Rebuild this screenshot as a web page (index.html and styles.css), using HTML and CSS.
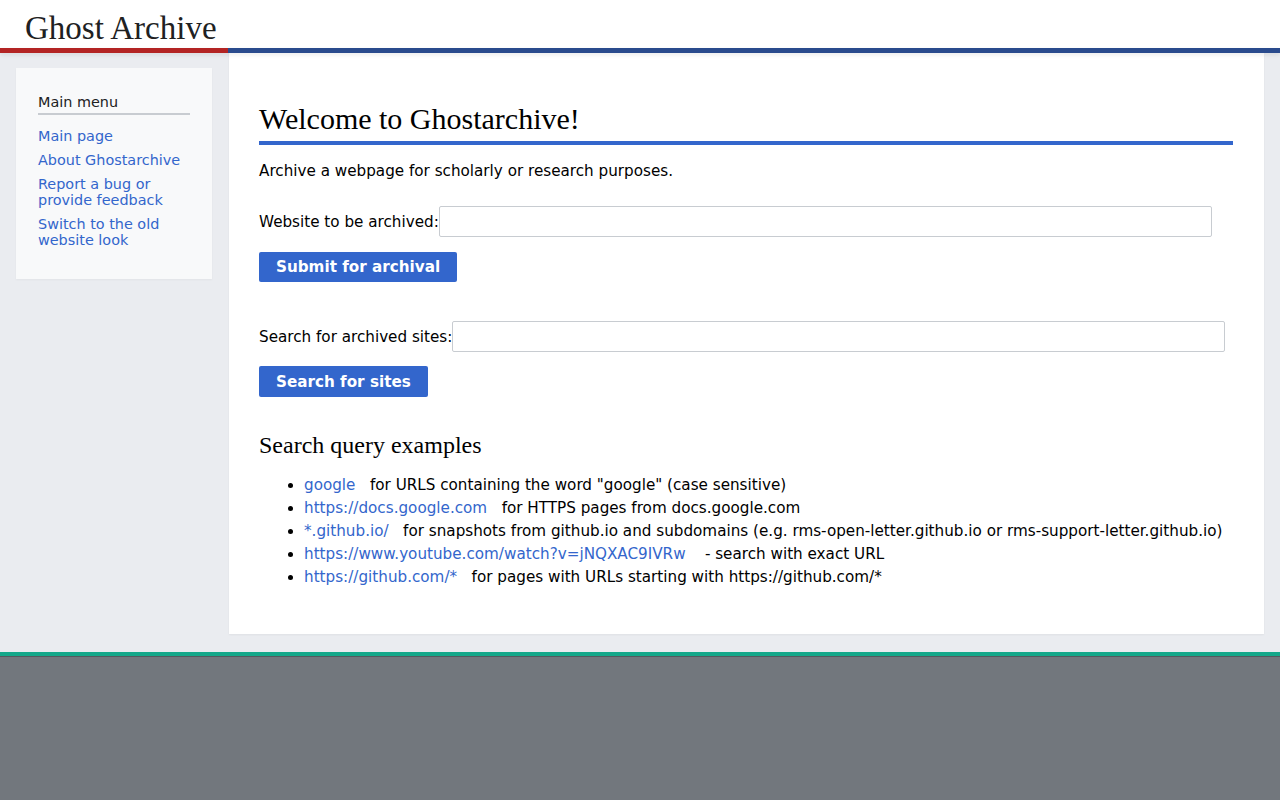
FILE: index.html
```html
<!DOCTYPE html>
<html lang="en">
<head>
<meta charset="utf-8">
<title>Ghost Archive</title>
<link rel="stylesheet" href="styles.css">
</head>
<body>
<header class="site-header">
  <a class="logo" href="#">Ghost Archive</a>
</header>
<div class="header-bar"><span class="bar-red"></span><span class="bar-blue"></span></div>
<div class="page">
  <nav class="sidebar">
    <div class="menu-box">
      <h3 class="menu-title">Main menu</h3>
      <ul class="menu-list">
        <li><a href="#">Main page</a></li>
        <li><a href="#">About Ghostarchive</a></li>
        <li><a href="#">Report a bug or provide feedback</a></li>
        <li><a href="#">Switch to the old website look</a></li>
      </ul>
    </div>
  </nav>
  <main class="content">
    <h1 class="page-title">Welcome to Ghostarchive!</h1>
    <p class="intro">Archive a webpage for scholarly or research purposes.</p>
    <form class="archive-form">
      <div class="field"><label for="archive">Website to be archived:</label><input id="archive" class="text-input" type="text"></div>
      <button class="btn" type="button">Submit for archival</button>
    </form>
    <form class="search-form">
      <div class="field"><label for="search">Search for archived sites:</label><input id="search" class="text-input" type="text"></div>
      <button class="btn btn-search" type="button">Search for sites</button>
    </form>
    <h2 class="section-title">Search query examples</h2>
    <ul class="examples">
      <li><a href="#">google</a>&nbsp;&nbsp; for URLS containing the word "google" (case sensitive)</li>
      <li><a href="#">https://docs.google.com</a>&nbsp;&nbsp; for HTTPS pages from docs.google.com</li>
      <li><a href="#">*.github.io/</a>&nbsp;&nbsp; for snapshots from github.io and subdomains (e.g. rms-open-letter.github.io or rms-support-letter.github.io)</li>
      <li><a href="#">https://www.youtube.com/watch?v=jNQXAC9IVRw</a>&nbsp;&nbsp;&nbsp; - search with exact URL</li>
      <li><a href="#">https://github.com/*</a>&nbsp;&nbsp; for pages with URLs starting with https://github.com/*</li>
    </ul>
  </main>
</div>
<footer class="site-footer"></footer>
</body>
</html>
```

FILE: styles.css
```css
html, body {
  margin: 0;
  padding: 0;
}

body {
  min-height: 100vh;
  display: flex;
  flex-direction: column;
  background: #eaecf0;
  color: #000;
  font-family: "DejaVu Sans", sans-serif;
  font-size: 15.2px;
}

a {
  color: #3366cc;
  text-decoration: none;
}

/* Header */
.site-header {
  height: 48px;
  background: #fff;
  padding-left: 25px;
  display: flex;
  align-items: flex-end;
}

.logo {
  color: #202122;
  font-family: "Liberation Serif", serif;
  font-size: 33px;
  line-height: 40px;
  padding-bottom: 0;
}

.header-bar {
  display: flex;
  height: 5px;
  box-shadow: 0 2px 4px rgba(0, 0, 0, 0.08);
  position: relative;
  z-index: 1;
}

.bar-red {
  width: 228px;
  background: #b32424;
}

.bar-blue {
  flex: 1;
  background: #2a4b8d;
}

/* Page columns */
.page {
  display: grid;
  grid-template-columns: 229px 1fr;
  padding-right: 16px;
}

.sidebar {
  padding: 15px 17px 0 16px;
}

.menu-box {
  background: #f8f9fa;
  padding: 25px 22px 31px;
  box-shadow: 0 1px 2px rgba(0, 0, 0, 0.04);
}

.menu-title {
  margin: 0;
  font-size: 14.4px;
  font-weight: normal;
  color: #202122;
  line-height: 18px;
  padding-bottom: 2px;
  border-bottom: 2px solid #c8ccd1;
}

.menu-list {
  list-style: none;
  margin: 13px 0 0;
  padding: 0;
  font-size: 14.4px;
  line-height: 16px;
}

.menu-list li {
  margin-bottom: 8px;
}

.menu-list li:last-child {
  margin-bottom: 0;
}

/* Main content card */
.content {
  background: #fff;
  padding: 48px 31px 45px 30px;
  box-shadow: 0 1px 2px rgba(0, 0, 0, 0.05);
}

.page-title {
  margin: 0 0 16px;
  font-family: "Liberation Serif", serif;
  font-weight: normal;
  font-size: 30px;
  line-height: 36px;
  padding-bottom: 4px;
  border-bottom: 4px solid #3366cc;
}

.intro {
  margin: 0 0 25px;
  line-height: 20px;
}

.field {
  display: flex;
  align-items: center;
}

.field label {
  white-space: nowrap;
}

.text-input {
  flex: none;
  width: 773px;
  height: 31px;
  box-sizing: border-box;
  border: 1px solid #c8ccd1;
  border-radius: 2px;
  margin: 0;
  padding: 0 6px;
  font: inherit;
}

.archive-form,
.search-form {
  display: flex;
  flex-direction: column;
  align-items: flex-start;
}

.archive-form {
  margin-bottom: 39px;
}

.btn {
  margin-top: 15px;
  height: 30px;
  padding: 0 17px;
  background: #3366cc;
  color: #fff;
  border: none;
  border-radius: 2px;
  font-family: "DejaVu Sans", sans-serif;
  font-weight: bold;
  font-size: 15.2px;
}

.btn-search {
  margin-top: 14px;
  height: 31px;
}

.section-title {
  margin: 33px 0 14px;
  font-family: "Liberation Serif", serif;
  font-weight: normal;
  font-size: 24px;
  line-height: 30px;
}

.examples {
  margin: 0;
  padding-left: 45px;
  line-height: 23px;
}

/* Footer */
.site-footer {
  flex: 1;
  margin-top: 18px;
  background: #72777d;
  border-top: 4px solid #14a88a;
  box-shadow: inset 0 1px 0 #54595d;
  min-height: 100px;
}
```
